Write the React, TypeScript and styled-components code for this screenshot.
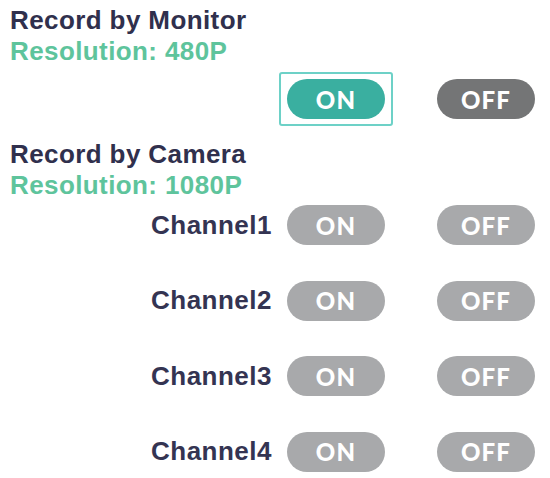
import React from "react";
import styled, { createGlobalStyle } from "styled-components";

const GlobalStyle = createGlobalStyle`
  html, body {
    margin: 0;
    padding: 0;
    background: #ffffff;
  }
  body {
    font-family: "Liberation Sans", Arial, sans-serif;
  }
`;

const Page = styled.div`
  width: 550px;
  height: 478px;
  padding: 5px 0 0 10px;
  box-sizing: border-box;
  overflow: hidden;
`;

const Section = styled.div<{ $top?: number }>`
  margin-top: ${(p) => p.$top ?? 0}px;
`;

const Heading = styled.div`
  font-family: "Liberation Sans", Arial, sans-serif;
  font-size: 26px;
  line-height: 31px;
  font-weight: 700;
  letter-spacing: 0.4px;
  color: #30304d;
  white-space: nowrap;
`;

const Resolution = styled(Heading)`
  color: #5ec49c;
`;

const Grid = styled.div<{ $top: number }>`
  display: grid;
  grid-template-columns: 277px 150px 98px;
  row-gap: 35.5px;
  align-items: center;
  margin-top: ${(p) => p.$top}px;
`;

const Label = styled.div`
  font-family: "Liberation Sans", Arial, sans-serif;
  font-size: 26px;
  font-weight: 700;
  letter-spacing: 0.5px;
  color: #343452;
  text-align: right;
  padding-right: 15px;
  white-space: nowrap;
`;

type Tone = "active" | "dark" | "idle";

const toneColor: Record<Tone, string> = {
  active: "#3aafa0",
  dark: "#747576",
  idle: "#a8a9ab",
};

const Pill = styled.button<{ $tone: Tone; $focused?: boolean }>`
  position: relative;
  width: 98px;
  height: 40px;
  border: none;
  border-radius: 20px;
  padding: 0;
  background: ${(p) => toneColor[p.$tone]};
  color: #ffffff;
  font-family: "Lato", "Open Sans", sans-serif;
  font-weight: 900;
  font-size: 24px;
  letter-spacing: 1.2px;
  display: flex;
  align-items: center;
  justify-content: center;
  cursor: pointer;

  &::after {
    content: "";
    display: ${(p) => (p.$focused ? "block" : "none")};
    position: absolute;
    inset: -7px -8px -7px -8px;
    border: 2px solid #6dd1c7;
    border-radius: 3px;
  }
`;

const channels = ["Channel1", "Channel2", "Channel3", "Channel4"];

export default function App() {
  return (
    <Page>
      <GlobalStyle />
      <Section>
        <Heading>Record by Monitor</Heading>
        <Resolution>Resolution: 480P</Resolution>
      </Section>
      <Grid $top={12}>
        <span />
        <Pill $tone="active" $focused>
          ON
        </Pill>
        <Pill $tone="dark">OFF</Pill>
      </Grid>
      <Section $top={20}>
        <Heading>Record by Camera</Heading>
        <Resolution>Resolution: 1080P</Resolution>
      </Section>
      <Grid $top={4}>
        {channels.map((name) => (
          <React.Fragment key={name}>
            <Label>{name}</Label>
            <Pill $tone="idle">ON</Pill>
            <Pill $tone="idle">OFF</Pill>
          </React.Fragment>
        ))}
      </Grid>
    </Page>
  );
}
